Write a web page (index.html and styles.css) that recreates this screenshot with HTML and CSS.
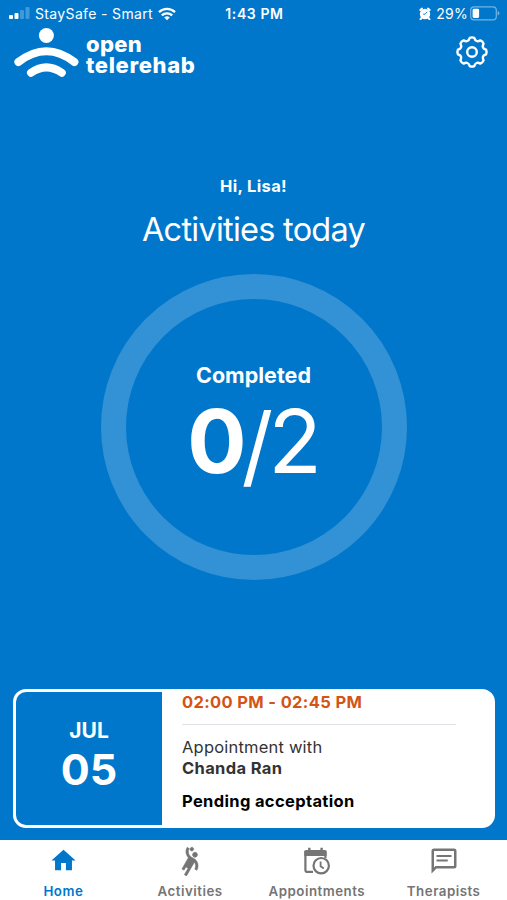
FILE: index.html
```html
<!DOCTYPE html>
<html lang="en">
	<head>
		<meta charset="utf-8" />
		<meta name="viewport" content="width=device-width, initial-scale=1" />
		<title>Open Telerehab</title>
		<link rel="stylesheet" href="styles.css">
	</head>
	<body>
		<div class="status">
			<div class="statusLeft">
				<svg class="signal" width="21" height="13" viewBox="0 0 21 13" fill="#fff">
					<rect x="0" y="8" width="4" height="4" rx="1"/>
					<rect x="5.5" y="6" width="4" height="6" rx="1"/>
					<rect x="11" y="3" width="4" height="9" rx="1" opacity=".25"/>
					<rect x="16.5" y="0" width="4" height="12" rx="1" opacity=".25"/>
				</svg>
				<span class="carrier">StaySafe - Smart</span>
				<svg class="wifi" width="18" height="14" viewBox="0 0 18 14" fill="none" stroke="#fff" stroke-width="2.3">
					<path d="M1 5.2a11.5 11.5 0 0 1 16 0"/>
					<path d="M3.8 8.4a7.5 7.5 0 0 1 10.4 0"/>
					<path d="M9 13.3L6.2 10.5a4 4 0 0 1 5.6 0z" fill="#fff" stroke="none"/>
				</svg>
			</div>
			<div class="time">1:43 PM</div>
			<div class="statusRight">
				<svg width="12" height="13" viewBox="0 0 12 13">
					<circle cx="6" cy="7" r="5.2" fill="#fff"/>
					<path d="M1.4 3L3 1.6M10.6 3L9 1.6M2.6 11l-1 1.2M9.4 11l1 1.2" stroke="#fff" stroke-width="2" stroke-linecap="round"/>
					<path d="M8.2 4.8L6 7.2H4.2" fill="none" stroke="#0077cb" stroke-width=".9"/>
				</svg>
				<span class="percent">29%</span>
				<svg class="battery" width="30" height="15" viewBox="0 0 30 15">
					<rect x=".7" y=".8" width="25.6" height="13" rx="3.4" fill="none" stroke="#fff" stroke-opacity=".45" stroke-width="1.2"/>
					<rect x="2.6" y="2.7" width="6.5" height="9.2" rx="1.4" fill="#fff"/>
					<path d="M27.6 5v4.6q1.8-.6 1.8-2.3T27.6 5z" fill="#fff" opacity=".45"/>
				</svg>
			</div>
		</div>
		<div class="header">
			<div class="logo">
				<svg width="66" height="50" viewBox="0 0 66 50" fill="none" stroke="#fff" stroke-linecap="round">
					<circle cx="32.4" cy="7.5" r="7.5" fill="#fff" stroke="none"/>
					<path d="M4.4 34Q32.4 12.5 60.4 34" stroke-width="8"/>
					<path d="M17 44.7Q32.4 34 47.8 44.7" stroke-width="8"/>
				</svg>
				<div class="logoText">
					<div>open</div>
					<div class="logoBottom">telerehab</div>
				</div>
			</div>
			<svg class="gear" width="34" height="34" viewBox="-17 -17 34 34" fill="none" stroke="#fff" stroke-width="2.4" stroke-linejoin="round">
				<path d="M14.12 -2.24Q15.1 0 14.12 2.24Q9.15 3.79 11.57 8.41Q10.7 10.7 8.41 11.57Q3.79 9.15 2.24 14.12Q0 15.1 -2.24 14.12Q-3.79 9.15 -8.41 11.57Q-10.7 10.7 -11.57 8.41Q-9.15 3.79 -14.12 2.24Q-15.1 0 -14.12 -2.24Q-9.15 -3.79 -11.57 -8.41Q-10.7 -10.7 -8.41 -11.57Q-3.79 -9.15 -2.24 -14.12Q0 -15.1 2.24 -14.12Q3.79 -9.15 8.41 -11.57Q10.7 -10.7 11.57 -8.41Q9.15 -3.79 14.12 -2.24z"/>
				<circle r="4.8"/>
			</svg>
		</div>
		<div class="main">
			<div class="hello">Hi, Lisa!</div>
			<div class="title">Activities today</div>
			<div class="ring">
				<div class="ringLabel">Completed</div>
				<div class="ringCount"><b>0</b><span class="slash">/</span><span>2</span></div>
			</div>
		</div>
		<div class="card">
			<div class="date">
				<div class="month">JUL</div>
				<div class="day">05</div>
			</div>
			<div class="details">
				<div class="hours">02:00 PM - 02:45 PM</div>
				<div class="with">Appointment with</div>
				<div class="name">Chanda Ran</div>
				<div class="pending">Pending acceptation</div>
			</div>
		</div>
		<div class="tabs">
			<div class="tab active">
				<svg width="29" height="29" viewBox="0 0 24 24" fill="currentColor">
					<path d="M10 20v-6h4v6h5v-8h3L12 3 2 12h3v8z"/>
				</svg>
				<span>Home</span>
			</div>
			<div class="tab">
				<svg width="30" height="30" viewBox="0 0 24 24" fill="currentColor" stroke="currentColor" stroke-width=".4">
					<path d="M14.27 6c-.55.95-.22 2.18.73 2.73.95.55 2.18.22 2.73-.73.55-.95.22-2.18-.73-2.73-.95-.55-2.18-.22-2.73.73z"/>
					<path d="M15.84 10.41l-2.6-1.5c-2.38-1.38-3.2-4.44-1.82-6.82l-1.73-1C8.1 3.83 8.6 7.21 10.66 9.4l-5.15 8.92 1.73 1 1.5-2.6 1.73 1-3 5.2 1.73 1 6.29-10.89c1.14 1.55 1.33 3.69.31 5.46l1.73 1c1.6-2.75 1.28-6.58-1.69-9.08z"/>
					<path d="M12.75 3.8c.72.41 1.63.17 2.05-.55.41-.72.17-1.63-.55-2.05-.72-.41-1.63-.17-2.05.55-.41.72-.17 1.64.55 2.05z"/>
				</svg>
				<span>Activities</span>
			</div>
			<div class="tab">
				<svg width="30" height="30" viewBox="0 0 30 30" fill="none" stroke="currentColor" stroke-width="2.2">
					<path d="M11 25.9H5.4a2 2 0 0 1-2-2V5.8h20v6.500"/>
					<path d="M2.3 6a2 2 0 0 1 2-2h18.300a2 2 0 0 1 2 2v4H2.300z" fill="currentColor" stroke="none"/>
					<path d="M7.3 1.8v4M19.6 1.8v4" stroke-width="2.4"/>
					<circle cx="19.2" cy="19.7" r="7.7"/>
					<path d="M18.6 15.5v4.8l3.2 2.2" stroke-width="1.8"/>
				</svg>
				<span>Appointments</span>
			</div>
			<div class="tab">
				<svg width="30" height="30" viewBox="0 0 24 24" fill="currentColor">
					<path d="M20 2a2 2 0 0 1 2 2v12a2 2 0 0 1-2 2H6l-4 4V4a2 2 0 0 1 2-2h16M4 4v13.17L5.17 16H20V4H4m2 3.2h12v1.6H6V7.2m0 3.6h9v1.6H6v-1.6z"/>
				</svg>
				<span>Therapists</span>
			</div>
		</div>
	</body>
</html>
```
FILE: styles.css
```css
* {
	box-sizing: border-box;
}
body {
	margin: 0;
	width: 507px;
	height: 900px;
	overflow: hidden;
	display: flex;
	flex-direction: column;
	background-color: #0077CB;
	color: #FFFFFF;
	font-family: Inter, "Liberation Sans", sans-serif;
	white-space: nowrap;
}
svg {
	display: block;
	flex: none;
}
.status {
	display: grid;
	grid-template-columns: 1fr auto 1fr;
	align-items: center;
	height: 27px;
	padding: 0 7px 0 9px;
	font-size: 14px;
}
.statusLeft, .statusRight {
	display: flex;
	align-items: center;
}
.statusRight {
	justify-content: flex-end;
}
.carrier {
	margin: 0 5px;
	letter-spacing: 0.35px;
}
.time {
	font-weight: 600;
	letter-spacing: 0.6px;
}
.percent {
	margin: 0 2px 0 5px;
	letter-spacing: 0.3px;
}
.header {
	display: flex;
	justify-content: space-between;
	height: 55px;
	padding: 0 18px 0 14px;
}
.logo {
	display: flex;
	gap: 6px;
	padding-top: 1px;
}
.logoText {
	padding-top: 6px;
	font-size: 22px;
	font-weight: 800;
	line-height: 21px;
	letter-spacing: 0.3px;
}
.logoBottom {
	letter-spacing: 0.65px;
}
.gear {
	margin-top: 8px;
}
.main {
	display: flex;
	flex-direction: column;
	align-items: center;
	height: 607px;
	padding-top: 92px;
}
.hello {
	font-size: 16.5px;
	font-weight: 700;
	line-height: 24px;
	letter-spacing: 0.35px;
}
.title {
	margin-top: 10px;
	font-size: 32.5px;
	line-height: 44px;
	letter-spacing: -0.75px;
}
.ring {
	display: flex;
	flex-direction: column;
	align-items: center;
	width: 306px;
	height: 306px;
	margin-top: 22px;
	padding-top: 63px;
	border: 25px solid #3391D5;
	border-radius: 50%;
}
.ringLabel {
	font-size: 21.5px;
	font-weight: 700;
	line-height: 27px;
}
.ringCount {
	display: flex;
	margin-right: 3px;
	font-size: 88px;
	line-height: 104px;
	letter-spacing: -5px;
}
.slash {
	padding-top: 4px;
}
.card {
	display: flex;
	height: 139px;
	margin: 0 12px 0 13px;
	border: 3px solid #FFFFFF;
	border-radius: 13px;
	background-color: #FFFFFF;
}
.date {
	width: 146px;
	padding-top: 25px;
	border-radius: 10px 0 0 10px;
	background-color: #0077CB;
	text-align: center;
	font-weight: 700;
}
.month {
	font-size: 21px;
	line-height: 27px;
}
.day {
	font-size: 43px;
	line-height: 50px;
}
.details {
	width: 294px;
	padding-left: 20px;
	color: #333333;
	font-size: 16.5px;
	line-height: 21px;
	letter-spacing: 0.2px;
}
.hours {
	height: 33px;
	margin-bottom: 12px;
	border-bottom: 1px solid #DEE2E6;
	color: #D35417;
	font-weight: 700;
	letter-spacing: 0.35px;
}
.name {
	font-weight: 700;
	letter-spacing: 0.35px;
}
.pending {
	margin-top: 12px;
	color: #000000;
	font-weight: 700;
	letter-spacing: 0.35px;
}
.tabs {
	display: grid;
	grid-template-columns: repeat(4, 1fr);
	height: 60px;
	margin-top: 12px;
	background-color: #FFFFFF;
}
.tab {
	display: flex;
	flex-direction: column;
	align-items: center;
	justify-content: space-between;
	padding: 6px 0 0;
	color: #757575;
	font-size: 13.3px;
	font-weight: 600;
	line-height: 18px;
	letter-spacing: 0.5px;
}
.active {
	color: #0077CB;
}
```
